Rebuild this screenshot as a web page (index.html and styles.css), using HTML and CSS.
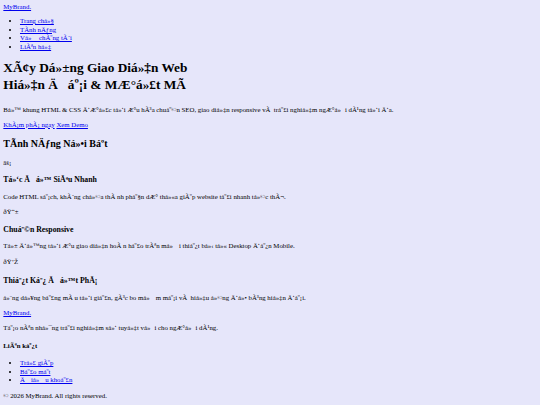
FILE: index.html
```html
<!DOCTYPE html>
<html lang="vi">
<head>
<meta charset="windows-1252">
<title>MyBrand</title>
<link rel="stylesheet" href="styles.css">
</head>
<body class="page">
<header class="site-header">
<a href="#" class="logo">MyBrand.</a>
<nav class="nav">
<ul class="list nav-list">
<li><a href="#">Trang chủ</a></li>
<li><a href="#">Tính năng</a></li>
<li><a href="#">Về chúng tôi</a></li>
<li><a href="#">Liên hệ</a></li>
</ul>
</nav>
</header>
<main>
<section class="hero">
<h1 class="title">Xây Dựng Giao Diện Web<br>Hiện Đại &amp; Mượt Mà</h1>
<p class="text">Bộ khung HTML &amp; CSS được tối ưu hóa chuẩn SEO, giao diện responsive và trải nghiệm người dùng tối đa.</p>
<div class="actions"><a href="#">Khám phá ngay</a> <a href="#">Xem Demo</a></div>
</section>
<section class="features">
<h2 class="section-title">Tính Năng Nổi Bật</h2>
<div class="card">
<div class="icon">⚡</div>
<h3 class="card-title">Tốc Độ Siêu Nhanh</h3>
<p class="text">Code HTML sạch, không chứa thành phần dư thừa giúp website tải nhanh tức thì.</p>
</div>
<div class="card">
<div class="icon">📱</div>
<h3 class="card-title">Chuẩn Responsive</h3>
<p class="text">Tự động tối ưu giao diện hoàn hảo trên mọi thiết bị từ Desktop đến Mobile.</p>
</div>
<div class="card">
<div class="icon icon-gem">💎</div>
<h3 class="card-title">Thiết Kế Đột Phá</h3>
<p class="text">Ứng dụng bảng màu tối giản, góc bo mềm mại và hiệu ứng đổ bóng hiện đại.</p>
</div>
</section>
</main>
<footer class="site-footer">
<a href="#" class="logo">MyBrand.</a>
<p class="text">Tạo nên những trải nghiệm số tuyệt vời cho người dùng.</p>
<h4 class="footer-title">Liên kết</h4>
<ul class="list">
<li><a href="#">Trợ giúp</a></li>
<li><a href="#">Bảo mật</a></li>
<li><a href="#">Điều khoản</a></li>
</ul>
<p class="copy">&copy; 2026 MyBrand. All rights reserved.</p>
</footer>
</body>
</html>
```
FILE: styles.css
```css
html {
  background: #e6e6fa;
}
.page {
  margin: 3.333px;
  font-family: "Liberation Serif", serif;
  font-size: 6.8px;
  line-height: 1.27;
  color: #000;
}
.page a {
  color: #0000ee;
}
.list {
  margin: 6.667px 0;
  padding-left: 16.667px;
}
.nav-list {
  margin-top: 5px;
}
.title {
  font-size: 13.333px;
  margin: 8.93px 0 11.4px;
}
.text {
  margin: 6.667px 0;
}
.section-title {
  font-size: 10px;
  margin: 8.3px 0;
}
.icon-gem {
  padding-bottom: 2px;
}
.card-title {
  font-size: 7.8px;
  margin: 7.8px 0;
}
.footer-title {
  font-size: 6.8px;
  margin: 8.87px 0;
}
.copy {
  margin: 6.667px 0;
}
```
